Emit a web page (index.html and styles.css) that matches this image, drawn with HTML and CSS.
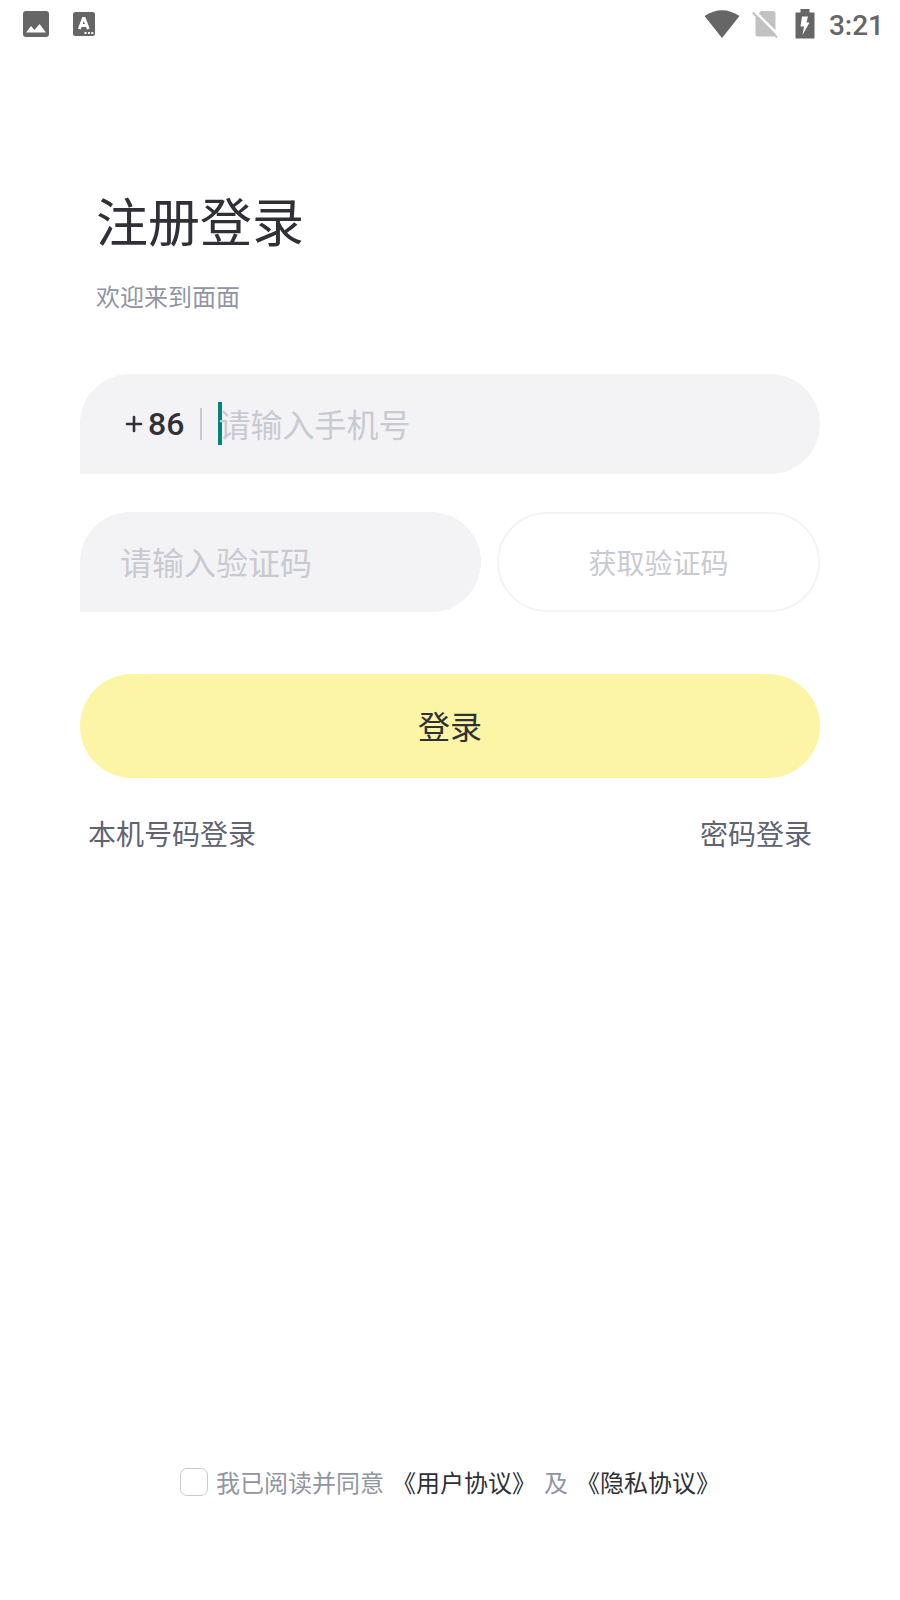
FILE: index.html
```html
<!DOCTYPE html>
<html lang="zh-CN">
<head>
<meta charset="utf-8">
<meta name="viewport" content="width=device-width, initial-scale=1">
<title>注册登录</title>
<link rel="stylesheet" href="styles.css">
</head>
<body class="screen">
<header class="status">
  <div class="status-group status-left">
    <svg class="icon" width="26" height="26" viewBox="0 0 26 26" aria-hidden="true">
      <rect width="26" height="26" rx="3" fill="#666"/>
      <path d="M3 21.500L8 15l3.500 4L16.500 13 23 21.500z" fill="#fff"/>
    </svg>
    <svg class="icon" width="22" height="24" viewBox="0 0 22 24" aria-hidden="true">
      <rect width="22" height="24" rx="2.500" fill="#666"/>
      <path d="M6.300 17L10.300 6.500h1L15.300 17M8 13.500h6" fill="none" stroke="#fff" stroke-width="2.800"/>
      <path d="M11.500 20h2v2h-2zM15 20h2v2h-2zM18.300 20h2v2h-2z" fill="#fff"/>
    </svg>
  </div>
  <div class="status-group status-right">
    <svg class="icon" width="36" height="28" viewBox="0 0 36 28" aria-hidden="true">
      <path d="M.500 6Q18-5.500 35.500 6L18 28z" fill="#666"/>
    </svg>
    <svg class="icon sim" width="26" height="28" viewBox="0 0 26 28" aria-hidden="true">
      <path d="M9 1h12q2.500 0 2.500 2.500V24q0 2.500-2.500 2.500H6Q3.500 26.500 3.500 24V7z" fill="#c2c2c2"/>
      <path d="M3 1.500L27 25.500" stroke="#fff" stroke-width="2.500"/>
      <path d="M.700 2.500L25 27.500" stroke="#c2c2c2" stroke-width="2"/>
    </svg>
    <svg class="icon battery" width="20" height="30" viewBox="0 0 20 30" aria-hidden="true">
      <path d="M5.500 0h9v3.500H19.500V29.500H.500V3.500h5z" fill="#666"/>
      <path d="M7 7.500h6l-1.500 6h3L7.500 26 9 17.500H5.500z" fill="#fff"/>
    </svg>
    <span class="clock">3:21</span>
  </div>
</header>
<main class="content">
  <h1 class="title">注册登录</h1>
  <p class="subtitle">欢迎来到面面</p>
  <form class="form">
    <div class="field phone">
      <label class="prefix" for="phone"><svg width="18" height="18" viewBox="0 0 18 18" role="img" aria-label="加"><path d="M9 2v14M2 9h14" stroke="#2f3137" stroke-width="2.600" stroke-linecap="round"/></svg><span>86</span></label>
      <span class="divider"></span>
      <input class="text-input caret" id="phone" type="tel" placeholder="请输入手机号">
    </div>
    <div class="code-row">
      <div class="field code">
        <input class="text-input" type="text" aria-label="验证码" placeholder="请输入验证码">
      </div>
      <button class="get-code" type="button">获取验证码</button>
    </div>
    <button class="submit" type="button">登录</button>
  </form>
  <nav class="links">
    <a href="#local">本机号码登录</a>
    <a href="#password">密码登录</a>
  </nav>
</main>
<footer class="agreement">
  <input class="check" id="agree" type="checkbox">
  <label for="agree">我已阅读并同意</label>
  <a href="#terms">《用户协议》</a>
  <span>及</span>
  <a href="#privacy">《隐私协议》</a>
</footer>
</body>
</html>
```
FILE: styles.css
```css
* {
  box-sizing: border-box;
}

.screen {
  display: flex;
  flex-direction: column;
  min-height: 100vh;
  margin: 0;
  background: #fff;
  color: #2f3137;
  font-family: "Noto Sans CJK SC", sans-serif;
}

a {
  color: inherit;
  text-decoration: none;
}

button,
input {
  margin: 0;
  font-family: inherit;
}

.icon {
  display: block;
}

.status {
  display: flex;
  align-items: center;
  justify-content: space-between;
  height: 48px;
  padding: 0 16px 0 23px;
}

.status-group {
  display: flex;
  align-items: center;
}

.status-left {
  gap: 24px;
}

.status-right {
  gap: 12px;
}

.battery {
  margin: 0 2px 0 5px;
}

.clock {
  padding-top: 4px;
  color: #666;
  font-family: Roboto, sans-serif;
  font-size: 28px;
  font-weight: 500;
  line-height: 32px;
}

.content {
  padding: 134px 80px 0;
}

.title {
  margin: 0;
  padding-left: 16px;
  font-size: 52px;
  font-weight: 400;
  line-height: 76px;
}

.subtitle {
  margin: 20px 0 0;
  padding-left: 16px;
  color: #9195a3;
  font-size: 24px;
  line-height: 36px;
}

.form {
  display: flex;
  flex-direction: column;
  margin-top: 60px;
}

.field {
  display: flex;
  align-items: center;
  height: 100px;
  border-radius: 50px 50px 50px 0;
  background: #f3f3f6;
}

.phone {
  padding: 0 40px 0 45px;
}

.prefix {
  display: flex;
  align-items: center;
  gap: 5px;
  font-family: Roboto, sans-serif;
  font-size: 32px;
  font-weight: 500;
  line-height: 44px;
}

.divider {
  width: 2px;
  height: 32px;
  margin: 0 16px;
  background: #c9cad1;
}

.text-input {
  flex: 1;
  min-width: 0;
  height: 48px;
  padding: 0 0 2px;
  border: 0;
  outline: 0;
  background: transparent;
  color: #2f3137;
  font-size: 32px;
  line-height: 46px;
}

.text-input::placeholder {
  color: #c9cad1;
  opacity: 1;
}

.caret {
  background: linear-gradient(#008577, #008577) 0 2px / 4px 43px no-repeat;
}

.code-row {
  display: grid;
  grid-template-columns: minmax(0, 401fr) minmax(0, 323fr);
  gap: 16px;
  margin-top: 38px;
}

.code {
  padding: 0 40px;
}

.get-code {
  height: 100px;
  padding: 0;
  border: 2px solid #f3f3f4;
  border-radius: 50px;
  background: #fff;
  color: #c9cad1;
  font-size: 28px;
}

.submit {
  height: 104px;
  margin-top: 62px;
  padding: 0 0 2px;
  border: 0;
  border-radius: 52px;
  background: #fcf5a6;
  color: #2f3137;
  font-size: 32px;
}

.links {
  display: flex;
  justify-content: space-between;
  margin-top: 35px;
  padding: 0 8px;
  color: #5f6372;
  font-size: 28px;
  line-height: 40px;
}

.agreement {
  display: flex;
  align-items: center;
  justify-content: center;
  gap: 8px;
  margin-top: auto;
  padding-bottom: 100px;
  color: #9195a3;
  font-size: 24px;
  line-height: 36px;
}

.agreement a {
  color: #2f3137;
}

.check {
  width: 28px;
  height: 28px;
  border: 1px solid #c9cad1;
  border-radius: 7px;
  background: #fff;
  appearance: none;
}
```
